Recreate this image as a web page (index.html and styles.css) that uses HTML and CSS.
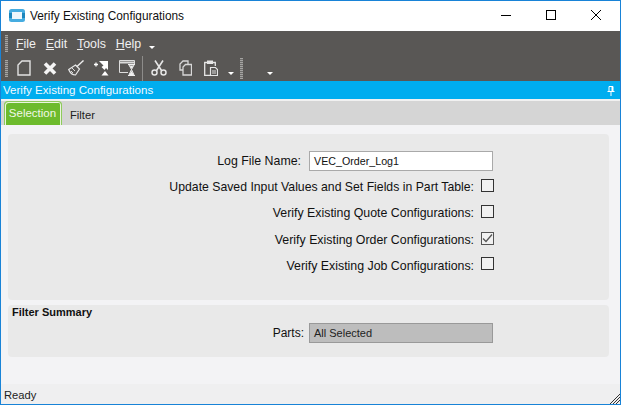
FILE: index.html
```html
<!DOCTYPE html>
<html lang="en">
<head>
<meta charset="utf-8">
<title>Verify Existing Configurations</title>
<link rel="stylesheet" href="styles.css">
</head>
<body>
<div class="window">
  <header class="titlebar">
    <svg class="appicon" width="16" height="13" viewBox="0 0 16 13"><rect x="0" y="0" width="16" height="13" rx="2.500" fill="#45ace0"/><rect x="0" y="4" width="16" height="5" fill="#1c86bd"/><rect x="3" y="3" width="10" height="7" fill="#eef7fc"/></svg>
    <span class="title">Verify Existing Configurations</span>
    <div class="winbtns">
      <svg width="12" height="12" viewBox="0 0 12 12"><path d="M1 6.500h10" stroke="#000" fill="none"/></svg>
      <svg width="12" height="12" viewBox="0 0 12 12"><rect x="1.500" y="1.500" width="9" height="9" stroke="#000" fill="none"/></svg>
      <svg width="12" height="12" viewBox="0 0 12 12"><path d="M1 1l10 10M11 1L1 11" stroke="#000" fill="none"/></svg>
    </div>
  </header>

  <div class="toolbars">
    <div class="menubar">
      <span class="grip"></span>
      <nav class="menu">
        <span><u>F</u>ile</span><span><u>E</u>dit</span><span><u>T</u>ools</span><span><u>H</u>elp</span>
      </nav>
      <span class="caret"></span>
    </div>
    <div class="iconbar">
      <span class="grip"></span>
      <svg class="tool t-new" width="14" height="16" viewBox="0 0 14 16"><path d="M5 1h8v14H1V5z" fill="none" stroke="#e2e2e2" stroke-width="1.400"/></svg>
      <svg class="tool t-x" width="14" height="13" viewBox="0 0 14 13"><path d="M2 1.500l10 10M12 1.500l-10 10" stroke="#f4f4f4" stroke-width="3.600" fill="none"/></svg>
      <svg class="tool t-broom" width="16" height="16" viewBox="0 0 16 16"><path d="M15.500 .5L9 6.500" stroke="#eee" stroke-width="1.400"/><path d="M7.500 5l4 4-4 6C4.500 15 2 13 .7 9.500z" fill="none" stroke="#e6e6e6" stroke-width="1.200"/><path d="M4 8l3 3M3 11l2 2" stroke="#ddd"/></svg>
      <svg class="tool t-move" width="15" height="16" viewBox="0 0 15 16"><path d="M0 4.500h4M2 2.500v4" stroke="#fff" stroke-width="1.300"/><path d="M5 1h9v9l-2-2-1.500 2-3-3 2-1.500z" fill="#fff"/><path d="M11 11l3.500 4.500h-7z" fill="#fff"/></svg>
      <svg class="tool t-wait" width="16" height="16" viewBox="0 0 16 16"><path d="M9 12.500H.5V.5h15V4" fill="none" stroke="#ddd"/><path d="M1 2.500h14" stroke="#ddd" stroke-width="2"/><path d="M9 4.500h7M9 15.500h7M10 5l2.500 4.500L10 15M15 5l-2.500 4.500L15 15" fill="none" stroke="#f0f0f0"/><path d="M10 15l2.500-4 2.500 4zM10.500 5.500h4l-2 3z" fill="#f0f0f0"/></svg>
      <span class="sep"></span>
      <svg class="tool t-cut" width="16" height="16" viewBox="0 0 16 16"><path d="M4 .5l6.500 10M12 .5L5.500 10.500" stroke="#e6e6e6" stroke-width="1.600" fill="none"/><circle cx="3.500" cy="12.500" r="2.500" fill="none" stroke="#e6e6e6" stroke-width="1.500"/><circle cx="12.500" cy="12.500" r="2.500" fill="none" stroke="#e6e6e6" stroke-width="1.500"/></svg>
      <svg class="tool t-copy" width="13" height="16" viewBox="0 0 13 16"><path d="M4 1h5v9H1V4z" fill="none" stroke="#d8d8d8" stroke-width="1.300"/><path d="M6.500 4.500h6v10.500h-8.500V7z" fill="#595755" stroke="#d8d8d8" stroke-width="1.300"/></svg>
      <svg class="tool t-paste" width="14" height="16" viewBox="0 0 14 16"><path d="M3 2.500H.7v13H6M9 2.500h2.300V6" fill="none" stroke="#e6e6e6" stroke-width="1.300"/><rect x="3" y=".5" width="6" height="3.500" fill="#e6e6e6"/><path d="M6.500 7.500h5l2 2v6h-7z" fill="none" stroke="#e6e6e6" stroke-width="1.200"/><path d="M8 11h4M8 13h4" stroke="#ddd"/></svg>
      <span class="caret c-a"></span>
      <span class="grip g-b"></span>
      <span class="caret c-b"></span>
    </div>
  </div>

  <div class="formtitle">
    <span>Verify Existing Configurations</span>
    <svg width="8" height="10" viewBox="0 0 8 10"><path d="M2 .5h4v5H2zM.5 5.500h7M4 6v4" fill="none" stroke="#fff"/><path d="M4.500 1h1.500v4H4.500z" fill="#fff"/></svg>
  </div>

  <div class="tabs">
    <span class="tab active">Selection</span>
    <span class="tab">Filter</span>
  </div>

  <main class="content">
    <section class="panel main">
      <div class="row r-input"><label>Log File Name:</label><span class="field">VEC_Order_Log1</span></div>
      <div class="row r-1"><label>Update Saved Input Values and Set Fields in Part Table:</label><span class="check"></span></div>
      <div class="row r-2"><label>Verify Existing Quote Configurations:</label><span class="check"></span></div>
      <div class="row r-3"><label>Verify Existing Order Configurations:</label><span class="check checked"><svg width="11" height="9" viewBox="0 0 11 9"><path d="M1 4.500l3 3 6-7" fill="none" stroke="#555" stroke-width="1.300"/></svg></span></div>
      <div class="row r-4"><label>Verify Existing Job Configurations:</label><span class="check"></span></div>
    </section>
    <section class="panel summary">
      <h2>Filter Summary</h2>
      <div class="row r-parts"><label>Parts:</label><span class="field disabled">All Selected</span></div>
    </section>
  </main>

  <footer class="status">
    <span>Ready</span>
    <svg class="resize" width="11" height="11" viewBox="0 0 11 11"><path d="M1 11L11 1M4 11l7-7M7 11l4-4" stroke="#333" fill="none"/></svg>
  </footer>
</div>
</body>
</html>
```
FILE: styles.css
```css
* { box-sizing: border-box; }
html, body { margin: 0; padding: 0; }
body { font-family: "Liberation Sans", Arial, sans-serif; font-size: 12px; color: #111; }
.window { width: 621px; height: 405px; border: 1px solid #1883d7; display: flex; flex-direction: column; background: #f3f3f5; overflow: hidden; }

.titlebar { height: 30px; flex: none; background: #fff; display: flex; align-items: center; padding-left: 8px; }
.appicon { margin-right: 5px; margin-top: -1px; }
.title { font-size: 11.850px; color: #111; margin-top: -1px; }
.winbtns { margin-left: auto; display: flex; gap: 33px; padding-right: 18px; margin-top: -2px; align-items: center; }
.winbtns svg { display: block; }

.toolbars { height: 50px; flex: none; background: #595755; display: flex; flex-direction: column; }
.menubar { height: 25px; display: flex; align-items: center; padding-left: 4px; flex: none; }
.iconbar { height: 25px; display: flex; align-items: center; padding-left: 4px; flex: none; position: relative; }
.grip { width: 3px; height: 17px; flex: none; background: repeating-linear-gradient(to bottom, #a5a4a2 0 1px, #6f6e6c 1px 2px); }
.menu { display: flex; gap: 9.800px; margin-left: 8px; color: #f0f0f0; font-size: 12.400px; }
.caret { width: 0; height: 0; border-left: 3px solid transparent; border-right: 3px solid transparent; border-top: 3px solid #fff; flex: none; margin-left: 8px; margin-top: 8px; }

.tool { flex: none; display: block; margin-top: -1px; }
.t-new { margin-left: 9px; }
.t-x { margin-left: 12px; }
.t-broom { margin-left: 11px; }
.t-move { margin-left: 10px; }
.t-wait { margin-left: 10px; }
.sep { width: 1px; height: 25px; background: #8d8c8a; margin-left: 7px; flex: none; }
.t-cut { margin-left: 8px; }
.t-copy { margin-left: 12px; }
.t-paste { margin-left: 12px; }
.c-a { margin-left: 10px; margin-top: 10px; }
.g-b { margin-left: 6px; height: 21px; }
.c-b { margin-left: 24px; margin-top: 10px; }

.formtitle { height: 18px; flex: none; background: #00adef; color: #f2faff; font-size: 11.550px; display: flex; align-items: center; justify-content: space-between; padding: 0 5px 0 2px; }
.formtitle svg { display: block; margin-top: 1px; }

.tabs { height: 26px; flex: none; background: #d5d5d5; border-top: 2px solid #f1f1f1; display: flex; align-items: flex-end; padding-left: 3px; }
.tab { height: 22px; padding: 0 9px 0 8px; font-size: 11.200px; line-height: 24px; color: #222; }
.tab.active { height: 24px; width: 58px; padding: 1px 1px 0 0; text-align: center; line-height: 21px; background: #6dbb2d; color: #f0f7e6; border: 1px solid #8fcb5c; border-bottom: 0; box-shadow: inset 1px 1px 0 #eaf5df, inset -1px 0 0 #eaf5df; border-radius: 4px 4px 0 0; font-size: 11.500px; }

.content { flex: 1; padding: 9px 11px 0 7px; display: flex; flex-direction: column; gap: 5px; min-height: 0; }
.panel { background: #e9e9e9; border-radius: 4px; flex: none; }
.main { height: 166px; padding-top: 17px; display: flex; flex-direction: column; }
.summary { height: 52px; padding-top: 1px; }
.summary h2 { margin: 0 0 0 4px; font-size: 11px; font-weight: bold; line-height: 13px; color: #111; }

.row { display: flex; align-items: center; justify-content: flex-end; }
.row label { font-size: 12.370px; white-space: nowrap; color: #111; }
.row.r-1 label { font-size: 12.250px; }
.main .row { padding-right: 115px; }
.row .check { margin-left: 7px; margin-bottom: 2px; }
.r-4 .check { margin-bottom: 4px; }
.r-input { height: 20px; padding-right: 116px !important; }
.r-1 { height: 15px; margin-top: 8px; }
.r-2 { height: 15px; margin-top: 11px; }
.r-3 { height: 15px; margin-top: 12px; }
.r-4 { height: 15px; margin-top: 11px; }
.r-parts { height: 20px; margin-top: 4px; padding-right: 116px; }
.r-parts .field { margin-left: 5px; }
.row.r-parts label { font-size: 12px; }
.r-input .field { margin-left: 8px; }

.field { display: block; width: 184px; height: 20px; line-height: 18px; background: #fff; border: 1px solid #a9a9a9; padding-left: 4px; font-size: 10.700px; color: #111; }
.field.disabled { background: #bdbdbd; border-color: #999; font-size: 11px; color: #222; }
.check { display: flex; align-items: center; justify-content: center; width: 13px; height: 13px; border: 1px solid #333; background: #f1f1f1; flex: none; }
.check.checked { border-color: #555; }

.status { height: 20px; flex: none; background: #efeff0; display: flex; align-items: center; padding-left: 3px; font-size: 11.200px; color: #222; position: relative; }
.status span { margin-top: 1px; }
.resize { position: absolute; right: 0; bottom: 0; }
```
